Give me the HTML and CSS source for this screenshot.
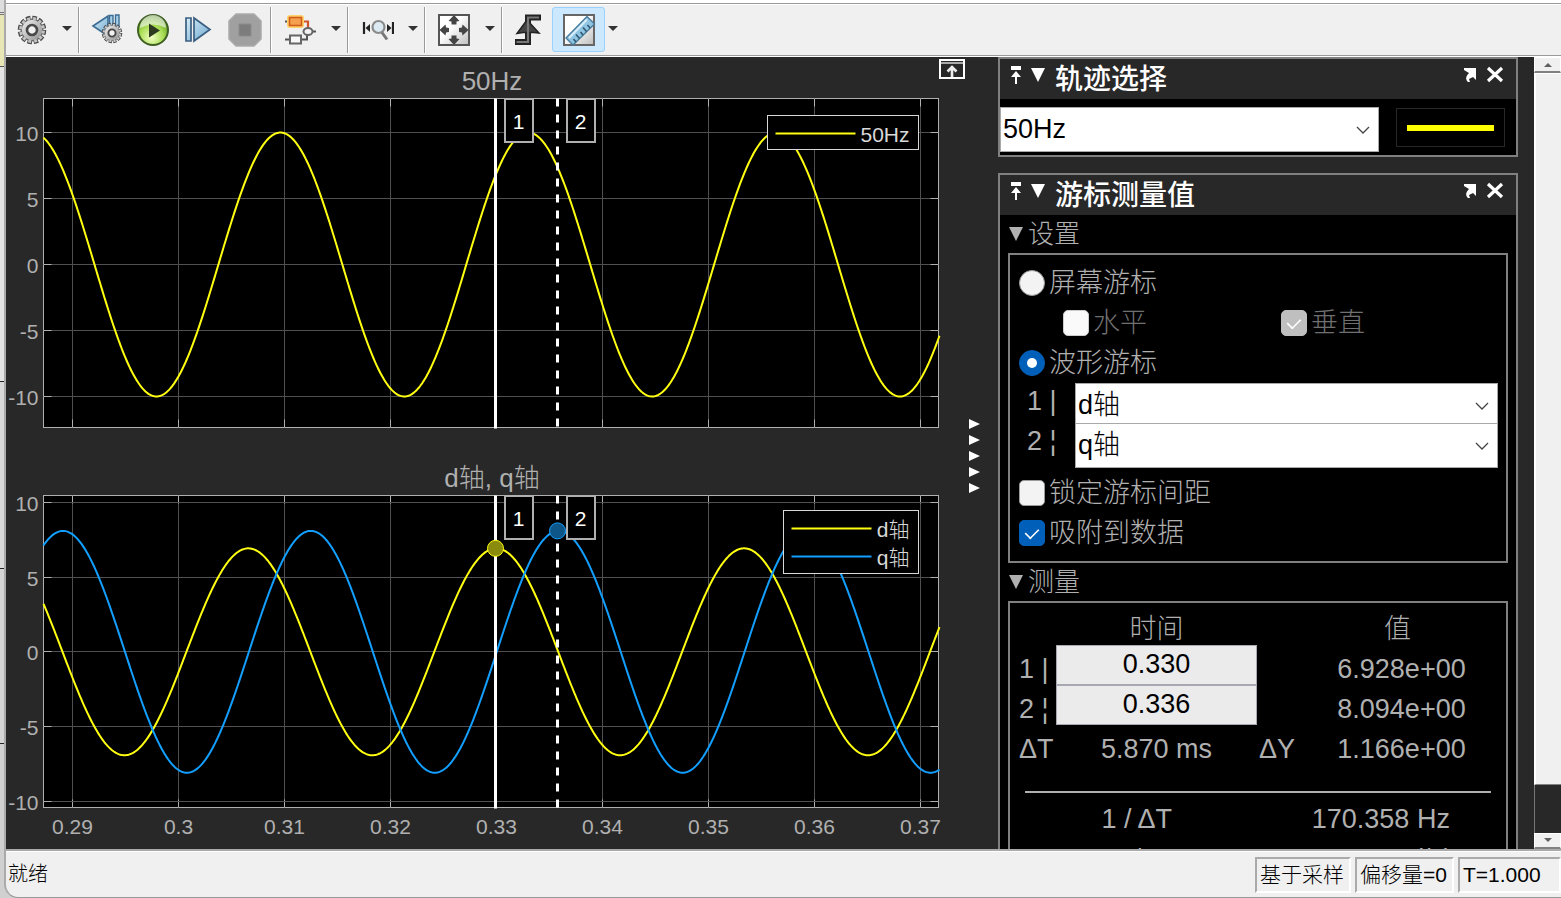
FILE: index.html
```html
<!DOCTYPE html>
<html lang="zh-CN">
<head>
<meta charset="utf-8">
<title>Scope</title>
<link rel="stylesheet" href="styles.css">
</head>
<body>
<svg width="0" height="0" class="defs" aria-hidden="true">
  <defs>
    <linearGradient id="metal" x1="0" y1="0" x2="1" y2="1"><stop offset="0" stop-color="#f4f4f4"/><stop offset="1" stop-color="#8c8c8c"/></linearGradient>
    <linearGradient id="blue" x1="0" y1="0" x2="1" y2="1"><stop offset="0" stop-color="#d6ecf8"/><stop offset="1" stop-color="#6fa9cf"/></linearGradient>
    <radialGradient id="green" cx=".45" cy=".75" r=".75"><stop offset="0" stop-color="#f2ffc4"/><stop offset=".55" stop-color="#a6dc50"/><stop offset="1" stop-color="#4c8a1a"/></radialGradient>
    <linearGradient id="paper" x1="0" y1="0" x2="1" y2="1"><stop offset=".4" stop-color="#fff"/><stop offset="1" stop-color="#bdbdbd"/></linearGradient>
    <g id="gear">
      <circle r="12" fill="none" stroke="#4a4a4a" stroke-width="4.500" stroke-dasharray="4.4 1.88"/>
      <circle r="10.800" fill="url(#metal)" stroke="#666" stroke-width="1.200"/>
      <circle r="11.400" fill="none" stroke="#c4c4c4" stroke-width="3.200" stroke-dasharray="2.8 3.17" stroke-dashoffset="-.8"/>
      <circle r="5" fill="#f0f0f0" stroke="#484848" stroke-width="2.600"/>
    </g>
  </defs>
</svg>
<div class="desktop">
<div class="window">
  <div class="menu-edge"></div>
  <div class="toolbar">
    <div class="group g-settings">
      <button class="tool w52" aria-label="配置属性"><svg width="32" height="32" viewBox="-16 -16 32 32"><use href="#gear"/></svg></button>
      <button class="caret w18" aria-label="更多"></button>
    </div>
    <div class="group g-run">
      <button class="tool w46" aria-label="步退选项"><svg width="32" height="32" viewBox="0 0 32 32"><path d="M2 12 17 2v20z" fill="url(#blue)" stroke="#3b6c93" stroke-width="1.6"/><path d="M18.500 1.500h3.500v11h-3.500zM24.500 1h3.500v12h-3.500z" fill="#a9d3ec" stroke="#3b6c93" stroke-width="1.400"/><use href="#gear" transform="translate(21 19) scale(.72)"/></svg></button>
      <button class="tool w46" aria-label="运行"><svg width="34" height="34" viewBox="0 0 34 34"><circle cx="17" cy="17" r="15" fill="url(#green)" stroke="#3f5f22" stroke-width="2"/><path d="M4 15A13 13 0 0 1 30 15Q17 8 4 15z" fill="#fff" opacity=".6"/><path d="M13 10.500v14L24 17.500z" fill="#2d3a20"/></svg></button>
      <button class="tool w46" aria-label="步进"><svg width="32" height="32" viewBox="0 0 32 32"><path d="M3 4h5v23H3zM11 4v23L27 15.500z" fill="url(#blue)" stroke="#3b5f80" stroke-width="1.700"/></svg></button>
      <button class="tool w46" aria-label="停止"><svg width="34" height="34" viewBox="0 0 34 34"><path d="M8 1h18l7 7v18l-7 7H8l-7-7V8z" fill="#a0a0a0" stroke="#aaa" stroke-width="1.500" stroke-linejoin="round"/><path d="M11 11h12v12H11z" fill="#7c7c7c" stroke="#8b8b8b"/></svg></button>
    </div>
    <div class="group">
      <button class="tool w56" aria-label="突出显示模块"><svg width="34" height="34" viewBox="0 0 34 34"><path d="M20 8.500h5v6" fill="none" stroke="#d0542a" stroke-width="2.200"/><path d="M2 26.500h5M18 26.500h6V18M29 18.500h4M2 8.500h4" fill="none" stroke="#555" stroke-width="2"/><rect x="4" y="2" width="17" height="13" rx="3" fill="#ffd36a"/><rect x="6.500" y="4.500" width="12" height="8" fill="#f5a04e" stroke="#cf5b1d" stroke-width="1.600"/><rect x="7" y="22.500" width="11" height="8" fill="#f7f7f7" stroke="#666" stroke-width="2"/><ellipse cx="25" cy="18.500" rx="4.500" ry="3.500" fill="#f4f4f4" stroke="#666" stroke-width="2"/></svg></button>
      <button class="caret w16" aria-label="更多"></button>
    </div>
    <div class="group">
      <button class="tool w56" aria-label="缩放 X"><svg width="34" height="34" viewBox="0 0 34 34"><path d="M4 9v12M33 9v12" stroke="#222" stroke-width="2.200"/><path d="M5.500 15 10 11v8zM31.500 15 27 11v8z" fill="#222"/><circle cx="18.500" cy="14" r="6" fill="#dceaf4" stroke="#8a8a8a" stroke-width="2.200"/><path d="m22 19.500 5 7" stroke="#777" stroke-width="3"/></svg></button>
      <button class="caret w16" aria-label="更多"></button>
    </div>
    <div class="group">
      <button class="tool w56" aria-label="缩放至合适"><svg width="34" height="34" viewBox="0 0 34 34"><rect x="2" y="2" width="30" height="30" fill="url(#paper)" stroke="#555" stroke-width="2"/><path d="m17 2 5.500 6-3 .5v3h-5v-3l-3-.5zM17 32l5.500-6-3-.5v-3h-5v3l-3 .5zM2.500 17l6-5.500.5 3 3 .5v4l-3 .5-.5 3zM31.500 17l-6-5.500-.5 3-3 .5v4l3 .5.5 3z" fill="#444"/></svg></button>
      <button class="caret w16" aria-label="更多"></button>
    </div>
    <div class="group g-last">
      <button class="tool w49" aria-label="触发器"><svg width="32" height="34" viewBox="0 0 32 34"><path d="M3 29h13V4.500h13" fill="none" stroke="#222" stroke-width="6"/><path d="M15 7 5 20.500l6-1h11l5 .5z" fill="#444" stroke="#222" stroke-width="1.500"/><path d="M4.500 29H16V4.500h11" fill="none" stroke="#777" stroke-width="2.200"/></svg></button>
      <button class="tool active" aria-label="游标测量" aria-pressed="true"><svg width="34" height="34" viewBox="0 0 34 34"><rect x="2" y="2" width="30" height="30" fill="url(#paper)" stroke="#666" stroke-width="2"/><path d="M4 25 25 3.500l7.500 7.500L11 32z" fill="#8fc4e2" stroke="#4b7c9c" stroke-width="1.400"/><path d="M7 25 25 6.500" stroke="#d8eefa" stroke-width="2"/><path d="m14 29-2.500-3M17.500 25.500l-3.500-4M21 22l-2.500-3M24.500 18.500l-3.500-4M28 15l-2.500-3" stroke="#2c5570" stroke-width="1.500"/></svg></button>
      <button class="caret w16" aria-label="更多"></button>
    </div>
  </div>

  <main class="content">
    <div class="scope">
      <svg class="chart" id="chart-top" role="img" aria-label="50Hz"></svg>
      <svg class="chart" id="chart-bottom" role="img" aria-label="d轴, q轴"></svg>
    </div>
    <div class="gutter">
      <button class="dock" aria-label="最大化坐标区"><svg width="26" height="20" viewBox="0 0 26 20"><rect x="1" y="1" width="24" height="18" fill="#282828" stroke="#fff" stroke-width="2"/><path d="M2 4h22" stroke="#aaa" stroke-width="2"/><path d="M13 18V7M8.500 12.500 13 8l4.500 4.500" fill="none" stroke="#eee" stroke-width="2.600"/></svg></button>
      <button class="splitter" aria-label="折叠面板"><svg width="12" height="76" viewBox="0 0 12 76"><path d="M1 1 12 6 1 11zM1 17l11 5-11 5zM1 33l11 5-11 5zM1 49l11 5-11 5zM1 65l11 5-11 5z" fill="#fff"/></svg></button>
    </div>
    <aside class="side">
      <section class="panel">
        <header class="panel-head">
          <button class="glyph" aria-label="固定"><svg width="12" height="18" viewBox="0 0 12 18"><path d="M1 0h10v4H1zM6 5l5 6H7v7H5v-7H1z" fill="#fff"/></svg></button>
          <button class="glyph" aria-label="折叠"><svg width="14" height="18" viewBox="0 0 14 18"><path d="M0 2h14L7 16z" fill="#fff"/></svg></button>
          <h2>轨迹选择</h2>
          <button class="glyph" aria-label="取消停靠"><svg width="14" height="18" viewBox="0 0 14 18"><path d="M1 2h12v12l-3-3-4 2 1 3H5c-3-3-2-6 1-9L1 4z" fill="#fff"/></svg></button>
          <button class="glyph" aria-label="关闭"><svg width="18" height="18" viewBox="0 0 18 18"><path d="m2 2 14 13M16 2 2 15" stroke="#fff" stroke-width="3.200"/></svg></button>
        </header>
        <div class="trace">
          <select class="combo" aria-label="轨迹"><option>50Hz</option></select>
          <div class="swatch"><span></span></div>
        </div>
      </section>

      <section class="panel">
        <header class="panel-head">
          <button class="glyph" aria-label="固定"><svg width="12" height="18" viewBox="0 0 12 18"><path d="M1 0h10v4H1zM6 5l5 6H7v7H5v-7H1z" fill="#fff"/></svg></button>
          <button class="glyph" aria-label="折叠"><svg width="14" height="18" viewBox="0 0 14 18"><path d="M0 2h14L7 16z" fill="#fff"/></svg></button>
          <h2>游标测量值</h2>
          <button class="glyph" aria-label="取消停靠"><svg width="14" height="18" viewBox="0 0 14 18"><path d="M1 2h12v12l-3-3-4 2 1 3H5c-3-3-2-6 1-9L1 4z" fill="#fff"/></svg></button>
          <button class="glyph" aria-label="关闭"><svg width="18" height="18" viewBox="0 0 18 18"><path d="m2 2 14 13M16 2 2 15" stroke="#fff" stroke-width="3.200"/></svg></button>
        </header>
        <h3><svg width="14" height="16" viewBox="0 0 14 16"><path d="M0 1h14L7 15z" fill="#b0b0b0"/></svg>设置</h3>
        <div class="box settings">
          <label class="opt"><input type="radio" name="cursor">屏幕游标</label>
          <div class="sub">
            <label class="opt off"><input type="checkbox" disabled>水平</label>
            <label class="opt off"><input type="checkbox" checked disabled>垂直</label>
          </div>
          <label class="opt"><input type="radio" name="cursor" checked>波形游标</label>
          <div class="source"><label for="src1">1 |</label><select class="combo" id="src1"><option>d轴</option></select></div>
          <div class="source last"><label for="src2">2 ¦</label><select class="combo" id="src2"><option>q轴</option></select></div>
          <label class="opt"><input type="checkbox">锁定游标间距</label>
          <label class="opt"><input type="checkbox" checked>吸附到数据</label>
        </div>
        <h3><svg width="14" height="16" viewBox="0 0 14 16"><path d="M0 1h14L7 15z" fill="#b0b0b0"/></svg>测量</h3>
        <div class="box">
          <table class="measure">
            <colgroup><col class="c-label"><col class="c-time"><col class="c-delta"><col></colgroup>
            <tr><th></th><th>时间</th><th></th><th class="h-value">值</th></tr>
            <tr><td class="l"><label for="t1">1 |</label></td><td class="field"><input id="t1" type="text" value="0.330"></td><td></td><td>6.928e+00</td></tr>
            <tr><td class="l"><label for="t2">2 ¦</label></td><td class="field"><input id="t2" type="text" value="0.336"></td><td></td><td>8.094e+00</td></tr>
            <tr><td class="l">ΔT</td><td>5.870 ms</td><td>ΔY</td><td>1.166e+00</td></tr>
          </table>
          <table class="rates">
            <tr><td>1 / ΔT</td><td class="rate">170.358 Hz</td></tr>
            <tr><td>ΔY / ΔT</td><td class="rate">198.648 (/s)</td></tr>
          </table>
        </div>
      </section>
    </aside>
    <div class="scrollbar">
      <button class="sb-btn" aria-label="向上"><svg width="8" height="5" viewBox="0 0 8 5"><path d="M0 5 4 1l4 4z" fill="#606060"/></svg></button>
      <div class="sb-thumb"></div>
      <div class="sb-track"></div>
      <button class="sb-btn" aria-label="向下"><svg width="8" height="5" viewBox="0 0 8 5"><path d="M0 0l4 4 4-4z" fill="#606060"/></svg></button>
    </div>
  </main>

  <footer class="status">
    <span class="ready">就绪</span>
    <span class="cell">基于采样</span>
    <span class="cell">偏移量=0</span>
    <span class="cell cell-time">T=1.000</span>
  </footer>
</div>
</div>
<script src="script.js"></script>
</body>
</html>
```
FILE: styles.css
```css
* { box-sizing: border-box; }

body {
  margin: 0;
  height: 100vh;
  overflow: hidden;
  font-family: "Liberation Sans", "Noto Sans CJK SC", sans-serif;
  font-size: 27px;
  font-weight: 300;
  color: #b0b0b0;
}

button {
  border: 0;
  padding: 0;
  background: none;
  display: flex;
  align-items: center;
  justify-content: center;
  flex: none;
}

svg { display: block; }
.defs { position: absolute; }

.desktop {
  height: 100vh;
  padding-left: 4px;
  background: linear-gradient(#ddd 0 12px, #777 12px 13px, #ddd 13px 14px, #777 14px 15px, #e8e6b4 15px 66px, #555 66px 67px, #e4e4e4 67px 381px, #222 381px 382px, #d8d8d8 382px 568px, #222 568px 569px, #d4d4d4 569px 743px, #222 743px 744px, #d0d0d0 744px);
}

.window {
  height: 100%;
  display: flex;
  flex-direction: column;
  border-left: 2px solid #aaa;
  border-bottom: 1px solid #999;
  border-bottom-left-radius: 14px;
  background: #f0f0f0;
  overflow: hidden;
}

.menu-edge { height: 4px; flex: none; background: #fff; border-bottom: 1px solid #999; }

.toolbar {
  height: 52px;
  flex: none;
  display: flex;
  align-items: stretch;
  padding: 2px 0;
  border-top: 1px solid #fff;
  border-bottom: 1px solid #999;
}

.group { display: flex; align-items: flex-start; padding-right: 3px; border-right: 1px solid #999; box-shadow: 1px 0 #fff; margin-right: 1px; }
.g-settings { padding-right: 2px; }
.g-run { padding: 0 2px 0 4px; }
.g-last { border: 0; box-shadow: none; padding: 0; }

.tool, .caret { height: 45px; }
.w16 { width: 16px; }
.w18 { width: 18px; }
.w46 { width: 46px; }
.w49 { width: 49px; }
.w52 { width: 52px; }
.w56 { width: 56px; }
.active { width: 53px; background: #cce8ff; border: 1px solid #99d1ff; border-radius: 3px; }

.caret::after { content: ""; border: 5px solid transparent; border-top-color: #333; border-bottom: 0; margin-bottom: 2px; }

.content { flex: 1; min-height: 0; display: flex; background: #282828; border-top: 1px solid #fff; }

.scope { flex: 1; min-width: 0; display: flex; flex-direction: column; }
.chart { flex: 1; min-height: 0; width: 100%; overflow: visible; }
.chart text { font-size: 21px; fill: #b0b0b0; }
.chart .title { font-size: 26px; text-anchor: middle; }
.chart .xtick { text-anchor: middle; }
.chart .ytick { text-anchor: end; }
.chart .legend-text { fill: #d8d8d8; text-anchor: end; }
.chart .flag-text { fill: #fff; text-anchor: middle; }
.chart .axes { fill: #000; stroke: #b0b0b0; }
.chart .grid { stroke: #505050; }
.chart .tick { stroke: #b0b0b0; }
.chart .flag, .chart .legend { fill: #000; stroke: #d8d8d8; }
.chart .flag { stroke-width: 2; stroke: #b0b0b0; }
.chart .curve { fill: none; stroke-width: 2; }
.chart .cursor { stroke: #fff; stroke-width: 3; }
.chart .dashed { stroke-dasharray: 8 8; }

.gutter { width: 58px; flex: none; display: flex; flex-direction: column; padding: 2px 0 16px; }
.dock { align-self: flex-start; margin-left: -1px; }
.splitter { margin: auto 18px auto auto; }

.side { width: 520px; flex: none; overflow: hidden; display: flex; flex-direction: column; gap: 16px; }
.panel { flex: none; border: 2px solid #808080; background: #000; }
.panel-head { display: flex; height: 40px; gap: 9px; padding: 0 12px 0 10px; background: #282828; }
.glyph { align-self: flex-start; padding-top: 7px; }
.panel-head h2 { flex: 1; margin: 0 0 0 1px; font-size: 28px; line-height: 42px; font-weight: 500; color: #fff; }

.trace { display: flex; align-items: center; gap: 17px; height: 56px; padding: 5px 11px 0 0; }
.trace .combo { height: 45px; flex: 1; }
.swatch { width: 109px; height: 39px; border: 1px solid #282828; padding: 16px 10px; margin-bottom: 4px; }
.swatch span { display: block; height: 6px; background: #ff0; }

.combo {
  appearance: none;
  min-width: 0;
  border: 1px solid #a8a8a8;
  border-radius: 0;
  padding: 0 40px 2px 2px;
  font: inherit;
  color: #000;
  background: #fff url("data:image/svg+xml,%3Csvg xmlns='http://www.w3.org/2000/svg' width='14' height='8'%3E%3Cpath d='M1 1l6 6 6-6' fill='none' stroke='%23444' stroke-width='1.3'/%3E%3C/svg%3E") no-repeat right 8px top 18px;
}

.panel h3 { display: flex; align-items: center; gap: 5px; height: 38px; line-height: 38px; margin: 0; padding-left: 9px; font-size: 26px; font-weight: 300; }
.box { margin: 0 8px; border: 2px solid #808080; }
.settings { padding: 8px; }
.opt { display: flex; align-items: center; gap: 4px; height: 40px; line-height: 40px; padding-left: 1px; }
.off { color: #707070; }
.sub { display: grid; grid-template-columns: 218px 1fr; padding-left: 44px; }

.opt input {
  appearance: none;
  width: 26px;
  height: 26px;
  flex: none;
  margin: 0;
  display: grid;
  place-items: center;
  border: 1px solid #999;
  border-radius: 5px;
  background: #f3f3f3;
}
.opt input[type="radio"] { border-radius: 50%; }
.opt input:checked { background: #005fb8; border-color: #005fb8; }
.opt input:disabled { background: #fafafa; border-color: #ccc; }
.opt input:checked:disabled { background: #bfbfbf; border-color: #bfbfbf; }
.opt input[type="radio"]:checked::after { content: ""; width: 10px; height: 10px; border-radius: 50%; background: #fff; }
.opt input[type="checkbox"]:checked::after { content: ""; width: 14px; height: 8px; margin-bottom: 3px; border: solid #fff; border-width: 0 0 2px 2px; transform: rotate(-45deg) scale(.8); }

.source { display: flex; height: 40px; padding-left: 9px; }
.source label { width: 48px; line-height: 36px; }
.source .combo { flex: 1; border-bottom: 0; padding-top: 4px; }
.source.last { height: 45px; margin-bottom: 5px; }
.last .combo { border-bottom: 1px solid #a8a8a8; }
.source.last .combo { padding: 0 40px 2px 2px; border-bottom: 1px solid #a8a8a8; }

table { border-collapse: collapse; table-layout: fixed; }
td, th { height: 40px; padding: 8px 0 0; font-weight: 300; text-align: center; line-height: 32px; }
.measure { width: 100%; margin-bottom: 26px; }
.measure th { height: 42px; padding-top: 10px; }
.measure .h-value { padding-right: 8px; }
.measure .l { text-align: left; padding-left: 9px; white-space: nowrap; }
.measure .field { padding: 0; }
.c-label { width: 46px; }
.c-time { width: 201px; }
.c-delta { width: 40px; }
.field input { display: block; width: 100%; height: 40px; border: 1px solid #a8a8b0; padding: 0 0 1px; background: #ebebeb; color: #000; font: inherit; text-align: center; }
.rates { width: calc(100% - 30px); margin: 0 15px 22px; border-top: 2px solid #b0b0b0; }
.rates td { width: 48%; padding: 8px 0 0; line-height: 32px; }
.rates .rate { width: 52%; padding-left: 22px; }
.rates tr:first-child td { padding: 10px 0 0; }
.rates tr:first-child .rate { padding-left: 22px; }

.scrollbar { width: 27px; flex: none; margin-left: 16px; display: flex; flex-direction: column; }
.sb-btn { height: 16px; background: #f0f0f0; border: 1px solid #fff; border-bottom: 2px solid #808080; }
.sb-thumb { flex: 712; background: #f0f0f0; border-left: 2px solid #fff; border-top: 1px solid #fff; border-bottom: 1px solid #808080; }
.sb-track { flex: 48; border-left: 1px solid #777; }

.status {
  height: 48px;
  flex: none;
  display: flex;
  align-items: center;
  gap: 4px;
  border-top: 2px solid #aaa;
  box-shadow: inset 0 1px #fff;
  font-size: 20px;
  line-height: 32px;
  color: #000;
}
.ready { flex: 1; padding-left: 2px; }
.cell { height: 36px; padding: 0 5px 0 3px; border: 2px solid #aaa; border-right-color: #fff; border-bottom-color: #fff; font-size: 21px; white-space: nowrap; margin-top: 2px; }
.cell-time { width: 103px; }
```
FILE: script.js
```js
const NS = "http://www.w3.org/2000/svg";
const T0 = 0.287215;
const T1 = 0.371744;
const PERIOD = 0.023409;
const YELLOW = "#ffff11";
const BLUE = "#139fff";

const charts = [
  {
    id: "chart-top", title: "50Hz", top: 41, bottom: 25, max: 12.58, min: -12.35, labels: false,
    curves: [{ name: "50Hz", amp: 10, peak: 0.309587, color: YELLOW }],
    legendTop: 17, legendWidth: 151
  },
  {
    id: "chart-bottom", title: "d轴, q轴", top: 42, bottom: 41, max: 10.47, min: -10.43, labels: true,
    curves: [
      { name: "d轴", amp: 6.93, peak: 0.306566, color: YELLOW, marker: 0.33, fill: "#8a8a0c" },
      { name: "q轴", amp: 8.1, peak: 0.312466, color: BLUE, marker: 0.33587, fill: "#0f5688" }
    ],
    legendTop: 15, legendWidth: 135
  }
];

function add(parent, tag, attrs, text) {
  const node = document.createElementNS(NS, tag);
  for (const key in attrs) node.setAttribute(key, attrs[key]);
  if (text !== undefined) node.textContent = text;
  parent.appendChild(node);
  return node;
}

function draw(c) {
  const svg = document.getElementById(c.id);
  const box = svg.getBoundingClientRect();
  svg.replaceChildren();
  const left = 37.5;
  const right = Math.floor(box.width) - 1.5;
  const top = c.top + 0.5;
  const bottom = Math.floor(box.height) - c.bottom - 0.5;
  const x = t => left + (t - T0) / (T1 - T0) * (right - left);
  const y = v => top + (c.max - v) / (c.max - c.min) * (bottom - top);
  const snap = n => Math.floor(n) + 0.5;
  const line = (x1, y1, x2, y2, cls) => add(svg, "line", { x1, y1, x2, y2, class: cls });

  add(svg, "rect", { x: left, y: top, width: right - left, height: bottom - top, class: "axes" });
  add(svg, "text", { x: (left + right) / 2 + 1, y: top - 9, class: "title" }, c.title);

  for (let i = 29; i <= 37; i++) {
    const px = snap(x(i / 100));
    line(px, top, px, bottom, "grid");
    line(px, top, px, top + 8, "tick");
    line(px, bottom, px, bottom - 8, "tick");
    if (c.labels) add(svg, "text", { x: px, y: bottom + 26, class: "xtick" }, String(i / 100));
  }
  for (let v = -10; v <= 10; v += 5) {
    const py = snap(y(v));
    line(left, py, right, py, "grid");
    line(left, py, left + 8, py, "tick");
    line(right, py, right - 8, py, "tick");
    add(svg, "text", { x: left - 5, y: py + 8, class: "ytick" }, String(v));
  }

  for (const k of c.curves) {
    let d = "";
    for (let px = left; px <= right + 1; px += 1) {
      const t = T0 + (px - left) / (right - left) * (T1 - T0);
      const v = k.amp * Math.cos(2 * Math.PI * (t - k.peak) / PERIOD);
      d += (d ? "L" : "M") + px + " " + y(v).toFixed(2);
    }
    add(svg, "path", { d, class: "curve", stroke: k.color });
  }

  const cursorX = t => snap(x(t)) - 1;
  for (const [t, name] of [[0.33, "1"], [0.33587, "2"]]) {
    const px = cursorX(t);
    line(px, top, px, bottom + 1, name === "2" ? "cursor dashed" : "cursor");
    add(svg, "rect", { x: px + 9.5, y: top + 0.5, width: 28, height: 43, class: "flag" });
    add(svg, "text", { x: px + 23, y: top + 30, class: "flag-text" }, name);
  }
  for (const k of c.curves) {
    if (k.marker) add(svg, "circle", { cx: cursorX(k.marker), cy: y(k.amp), r: 8, fill: k.fill, stroke: k.color });
  }

  const lx = right - 20 - c.legendWidth;
  const ly = top + c.legendTop;
  add(svg, "rect", { x: lx, y: ly, width: c.legendWidth, height: c.curves.length === 1 ? 34 : 63, class: "legend" });
  c.curves.forEach((k, i) => {
    const cy = ly + 18 + i * 28;
    add(svg, "line", { x1: lx + 8, x2: lx + 88, y1: cy, y2: cy, stroke: k.color, "stroke-width": 2 });
    add(svg, "text", { x: lx + c.legendWidth - 9, y: cy + 8, class: "legend-text" }, k.name);
  });
}

function drawAll() { charts.forEach(draw); }
drawAll();
window.addEventListener("resize", drawAll);
```
